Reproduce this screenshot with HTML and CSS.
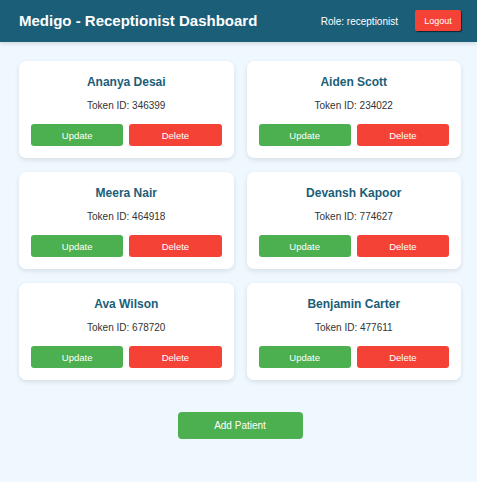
FILE: index.html
```html
<!DOCTYPE html>
<html>
<head>
<meta charset="utf-8">
<link rel="stylesheet" href="styles.css">
</head>
<body>
<header class="topbar">
  <h1 class="title">Medigo - Receptionist Dashboard</h1>
  <div class="user">
    <span class="role">Role: receptionist</span>
    <button class="logout">Logout</button>
  </div>
</header>
<main class="content">
  <div class="grid">
    <div class="card">
      <h2 class="name">Ananya Desai</h2>
      <p class="token">Token ID: 346399</p>
      <div class="actions"><button class="btn update">Update</button><button class="btn delete">Delete</button></div>
    </div>
    <div class="card">
      <h2 class="name">Aiden Scott</h2>
      <p class="token">Token ID: 234022</p>
      <div class="actions"><button class="btn update">Update</button><button class="btn delete">Delete</button></div>
    </div>
    <div class="card">
      <h2 class="name">Meera Nair</h2>
      <p class="token">Token ID: 464918</p>
      <div class="actions"><button class="btn update">Update</button><button class="btn delete">Delete</button></div>
    </div>
    <div class="card">
      <h2 class="name">Devansh Kapoor</h2>
      <p class="token">Token ID: 774627</p>
      <div class="actions"><button class="btn update">Update</button><button class="btn delete">Delete</button></div>
    </div>
    <div class="card">
      <h2 class="name">Ava Wilson</h2>
      <p class="token">Token ID: 678720</p>
      <div class="actions"><button class="btn update">Update</button><button class="btn delete">Delete</button></div>
    </div>
    <div class="card">
      <h2 class="name">Benjamin Carter</h2>
      <p class="token">Token ID: 477611</p>
      <div class="actions"><button class="btn update">Update</button><button class="btn delete">Delete</button></div>
    </div>
  </div>
  <div class="add-wrap"><button class="add">Add Patient</button></div>
</main>
</body>
</html>
```
FILE: styles.css
```css
* { box-sizing: border-box; }
html, body { margin: 0; padding: 0; }
body {
  background: #eff7ff;
  font-family: "Liberation Sans", Arial, sans-serif;
  color: #333;
  height: 482px;
}
.topbar {
  height: 42px;
  background: #1b5e78;
  display: flex;
  align-items: center;
  justify-content: space-between;
  padding: 0 16px 0 19px;
  box-shadow: 0 2px 4px rgba(0,0,0,0.12);
}
.title {
  margin: 0 0 1px;
  color: #fff;
  font-size: 15px;
  font-weight: bold;
}
.user {
  display: flex;
  align-items: center;
  gap: 17px;
}
.role {
  color: #fff;
  font-size: 10px;
}
.logout {
  width: 46px;
  height: 21px;
  margin-bottom: 1px;
  border: none;
  border-radius: 2px;
  background: #f44336;
  color: #fff;
  font-family: inherit;
  font-size: 9px;
  padding: 0;
  box-shadow: 1px 1px 1px rgba(0,0,0,0.6);
}
.content {
  padding: 19px 16px 0 19px;
}
.grid {
  display: grid;
  grid-template-columns: 1fr 1fr;
  column-gap: 13px;
  row-gap: 14px;
}
.card {
  background: #fff;
  border-radius: 7px;
  box-shadow: 0 2px 5px rgba(0,0,0,0.1);
  padding: 14px 12px 12px 12px;
  height: 97px;
  text-align: center;
}
.name {
  margin: 0;
  font-size: 12px;
  line-height: 15px;
  font-weight: bold;
  color: #1b5e78;
}
.token {
  margin: 10px 0 0;
  font-size: 10px;
  line-height: 12px;
  color: #333;
}
.actions {
  display: flex;
  gap: 6px;
  margin-top: 12px;
}
.btn {
  flex: 1;
  height: 22px;
  border: none;
  border-radius: 3px;
  color: #fff;
  font-family: inherit;
  font-size: 9.5px;
  padding: 0;
}
.update { background: #4caf50; }
.delete { background: #f44336; }
.add-wrap {
  display: flex;
  justify-content: center;
  margin-top: 32px;
}
.add {
  width: 125px;
  height: 27px;
  border: none;
  border-radius: 4px;
  background: #4caf50;
  color: #fff;
  font-family: inherit;
  font-size: 10px;
  padding: 0;
}
```
